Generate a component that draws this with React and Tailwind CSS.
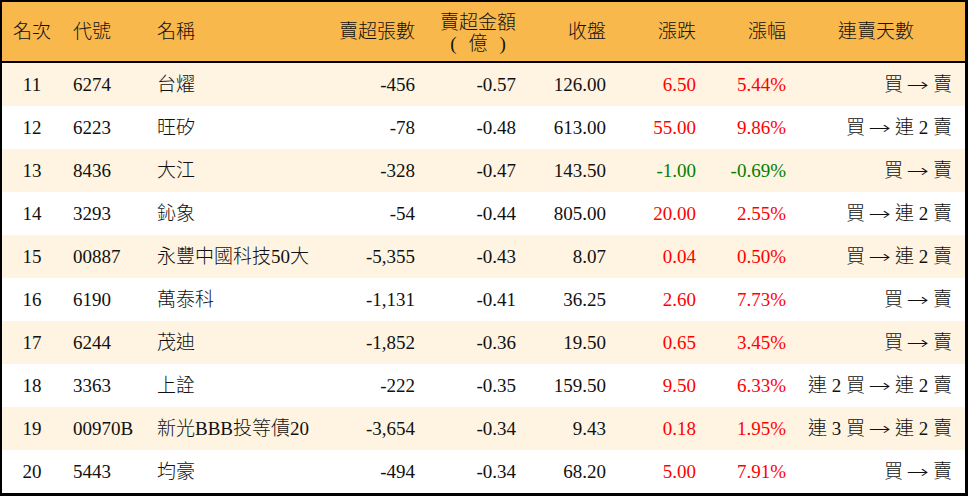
import React from "react";

const rows = [
  ["11", "6274", "台燿", "-456", "-0.57", "126.00", "6.50", "5.44%", ["買", "賣"], "r"],
  ["12", "6223", "旺矽", "-78", "-0.48", "613.00", "55.00", "9.86%", ["買", "連 2 賣"], "r"],
  ["13", "8436", "大江", "-328", "-0.47", "143.50", "-1.00", "-0.69%", ["買", "賣"], "g"],
  ["14", "3293", "鈊象", "-54", "-0.44", "805.00", "20.00", "2.55%", ["買", "連 2 賣"], "r"],
  ["15", "00887", "永豐中國科技50大", "-5,355", "-0.43", "8.07", "0.04", "0.50%", ["買", "連 2 賣"], "r"],
  ["16", "6190", "萬泰科", "-1,131", "-0.41", "36.25", "2.60", "7.73%", ["買", "賣"], "r"],
  ["17", "6244", "茂迪", "-1,852", "-0.36", "19.50", "0.65", "3.45%", ["買", "賣"], "r"],
  ["18", "3363", "上詮", "-222", "-0.35", "159.50", "9.50", "6.33%", ["連 2 買", "連 2 賣"], "r"],
  ["19", "00970B", "新光BBB投等債20", "-3,654", "-0.34", "9.43", "0.18", "1.95%", ["連 3 買", "連 2 賣"], "r"],
  ["20", "5443", "均豪", "-494", "-0.34", "68.20", "5.00", "7.91%", ["買", "賣"], "r"],
];

const grid =
  "grid grid-cols-[60px_83px_171px_111px_101px_90px_90px_90px_167px] items-center";

function Arrow() {
  return (
    <span className="inline-block w-[26px] mx-[2px] text-center">
      <span className="inline-block scale-x-150 font-['DejaVu_Sans',sans-serif] text-[18px] font-light">→</span>
    </span>
  );
}

export default function App() {
  return (
    <div className="w-[968px] h-[496px] bg-white font-['Liberation_Serif','Noto_Sans_CJK_TC',serif] text-[19px] font-light text-[#111] leading-none">
      <div className="w-[968px] h-[496px] border-t-2 border-l-2 border-r-[3px] border-b-[3px] border-black flex flex-col">
        <div className={`${grid} h-[61px] bg-[#f9b84b] border-b-2 border-black`}>
          <div className="text-center">名次</div>
          <div className="pl-[11px]">代號</div>
          <div className="pl-[12px]">名稱</div>
          <div className="text-right pr-[12px]">賣超張數</div>
          <div className="text-right pr-[12px] pt-[2px]">
            <div className="inline-block text-center leading-[21px]">
              賣超金額
              <br />
              <span>(</span>
              <span className="mx-[12px]">億</span>
              <span>)</span>
            </div>
          </div>
          <div className="text-right pr-[12px]">收盤</div>
          <div className="text-right pr-[12px]">漲跌</div>
          <div className="text-right pr-[12px]">漲幅</div>
          <div className="text-center pr-[13px] pl-[2px]">連賣天數</div>
        </div>
        {rows.map((r, i) => {
          const c = r[9] === "g" ? "text-[#008000]" : "text-[#ff0000]";
          return (
            <div
              key={r[0]}
              className={`${grid} h-[43px] ${i % 2 === 0 ? "bg-[#fef4e1]" : "bg-white"}`}
            >
              <div className="text-center">{r[0]}</div>
              <div className="pl-[11px]">{r[1]}</div>
              <div className="pl-[12px] whitespace-nowrap">{r[2]}</div>
              <div className="text-right pr-[12px]">{r[3]}</div>
              <div className="text-right pr-[12px]">{r[4]}</div>
              <div className="text-right pr-[12px]">{r[5]}</div>
              <div className={`text-right pr-[12px] ${c}`}>{r[6]}</div>
              <div className={`text-right pr-[12px] ${c}`}>{r[7]}</div>
              <div className="text-right pr-[13px] whitespace-pre">
                {r[8][0]}
                <Arrow />
                {r[8][1]}
              </div>
            </div>
          );
        })}
      </div>
    </div>
  );
}
